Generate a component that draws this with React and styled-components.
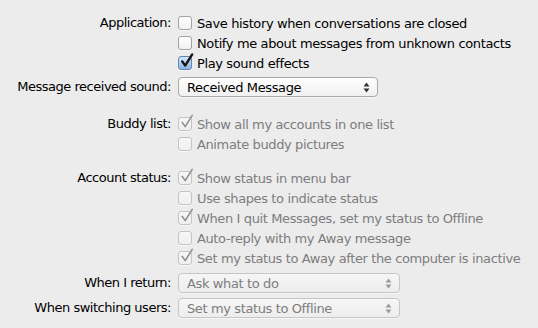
import styled, { createGlobalStyle, css } from 'styled-components';

// ------------------------------------ Global ----------------------------------

const GlobalStyle = createGlobalStyle`
  html, body {
    margin: 0;
    padding: 0;
    background: #ececec;
  }
  body {
    font-family: "DejaVu Sans", "Liberation Sans", sans-serif;
    font-size: 13px;
    color: #000;
  }
`;

// ------------------------------------ Layout ----------------------------------

const Panel = styled.div`
  width: 538px;
  height: 328px;
  box-sizing: border-box;
  padding-top: 13px;
  display: grid;
  grid-template-columns: 171px 1fr;
  column-gap: 7px;
  align-content: start;
  background: #ececec;
`;

const Label = styled.div`
  grid-column: 1;
  height: 20px;
  line-height: 20px;
  text-align: right;
  white-space: nowrap;
  margin-top: ${(p) => p.$top || 0}px;
  letter-spacing: -0.48px;
`;

const Controls = styled.div`
  grid-column: 2;
  display: flex;
  flex-direction: column;
  margin-top: ${(p) => p.$top || 0}px;
`;

// ------------------------------------ Checkbox ----------------------------------

const Row = styled.label`
  display: flex;
  align-items: center;
  height: 20px;
  gap: 5px;
  white-space: nowrap;
  letter-spacing: -0.38px;
  color: ${(p) => (p.$disabled ? '#7d7d7d' : '#000')};
`;

const Box = styled.span`
  position: relative;
  flex: none;
  width: 12px;
  height: 12px;
  border-radius: 3px;
  border: 1px solid #a3a3a3;
  background: linear-gradient(#ffffff, #f1f1f1);
  box-shadow: 0 1px 0 rgba(255, 255, 255, 0.6);

  ${(p) =>
    p.$checked &&
    !p.$disabled &&
    css`
      border-color: #5f86b5;
      background: linear-gradient(#d3e5f9, #8db5e4);
    `}

  ${(p) =>
    p.$disabled &&
    css`
      border-color: #c4c4c4;
      background: linear-gradient(#f7f7f7, #efefef);
    `}

  svg {
    position: absolute;
    left: 1px;
    top: -4px;
  }
`;

const Check = ({ disabled }) => (
  <svg width="14" height="15" viewBox="0 0 14 15">
    <path
      d="M2.2 8.4 L5.2 12.6 L12.2 1.4"
      fill="none"
      stroke={disabled ? '#8f8f8f' : '#151515'}
      strokeWidth={disabled ? 1.6 : 2.4}
      strokeLinecap="round"
      strokeLinejoin="round"
    />
  </svg>
);

const Checkbox = ({ checked, disabled, children }) => (
  <Row $disabled={disabled}>
    <Box $checked={checked} $disabled={disabled}>
      {checked && <Check disabled={disabled} />}
    </Box>
    {children}
  </Row>
);

// ------------------------------------ Popup ----------------------------------

const PopupBox = styled.div`
  box-sizing: border-box;
  width: ${(p) => p.$width}px;
  height: 20px;
  margin-top: ${(p) => p.$top || 0}px;
  padding: 0 7px 0 8px;
  display: flex;
  align-items: center;
  justify-content: space-between;
  border: 1px solid ${(p) => (p.$disabled ? '#c6c6c6' : '#a8a8a8')};
  border-radius: 4px;
  background: ${(p) =>
    p.$disabled
      ? 'linear-gradient(#f6f6f6, #ededed)'
      : 'linear-gradient(#ffffff, #f0f0f0)'};
  box-shadow: 0 1px 0 rgba(255, 255, 255, 0.5);
  color: ${(p) => (p.$disabled ? '#7d7d7d' : '#000')};
  letter-spacing: -0.38px;
  white-space: nowrap;
`;

const Arrows = ({ disabled }) => (
  <svg width="7" height="11" viewBox="0 0 7 11">
    <path d="M3.5 0.5 L6.5 4.5 L0.5 4.5 Z" fill={disabled ? '#9a9a9a' : '#333'} />
    <path d="M3.5 10.5 L6.5 6.5 L0.5 6.5 Z" fill={disabled ? '#9a9a9a' : '#333'} />
  </svg>
);

const Popup = ({ width, top, disabled, children }) => (
  <PopupBox $width={width} $top={top} $disabled={disabled}>
    <span>{children}</span>
    <Arrows disabled={disabled} />
  </PopupBox>
);

// ------------------------------------ App ----------------------------------

export default function App() {
  return (
    <>
      <GlobalStyle />
      <Panel>
        <Label>Application:</Label>
        <Controls>
          <Checkbox>Save history when conversations are closed</Checkbox>
          <Checkbox>Notify me about messages from unknown contacts</Checkbox>
          <Checkbox checked>Play sound effects</Checkbox>
        </Controls>

        <Label $top={4}>Message received sound:</Label>
        <Controls $top={4}>
          <Popup width={200}>Received Message</Popup>
        </Controls>

        <Label $top={17}>Buddy list:</Label>
        <Controls $top={17}>
          <Checkbox checked disabled>Show all my accounts in one list</Checkbox>
          <Checkbox disabled>Animate buddy pictures</Checkbox>
        </Controls>

        <Label $top={14}>Account status:</Label>
        <Controls $top={14}>
          <Checkbox checked disabled>Show status in menu bar</Checkbox>
          <Checkbox disabled>Use shapes to indicate status</Checkbox>
          <Checkbox checked disabled>When I quit Messages, set my status to Offline</Checkbox>
          <Checkbox disabled>Auto-reply with my Away message</Checkbox>
          <Checkbox checked disabled>Set my status to Away after the computer is inactive</Checkbox>
        </Controls>

        <Label $top={5}>When I return:</Label>
        <Controls $top={5}>
          <Popup width={222} disabled>Ask what to do</Popup>
        </Controls>

        <Label $top={5}>When switching users:</Label>
        <Controls $top={5}>
          <Popup width={222} disabled>Set my status to Offline</Popup>
        </Controls>
      </Panel>
    </>
  );
}
